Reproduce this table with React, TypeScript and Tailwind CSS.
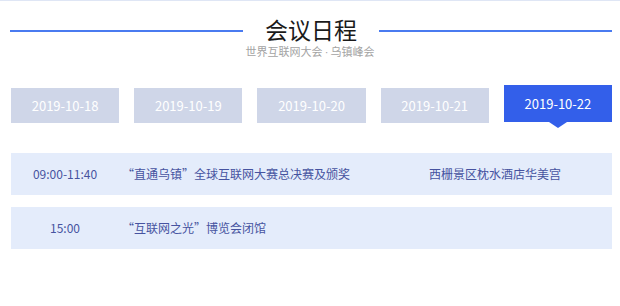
const dates = ["2019-10-18", "2019-10-19", "2019-10-20", "2019-10-21", "2019-10-22"];

const agenda = [
  { time: "09:00-11:40", title: "“直通乌镇”全球互联网大赛总决赛及颁奖", place: "西栅景区枕水酒店华美宫" },
  { time: "15:00", title: "“互联网之光”博览会闭馆", place: "" },
];

export default function App() {
  const active = 4;
  return (
    <div
      className="h-[306px] w-[620px] overflow-hidden border-t border-[#dfe6f5] bg-white"
      style={{ fontFamily: '"Noto Sans CJK SC", "Noto Sans", sans-serif' }}
    >
      {/* Heading */}
      <div className="flex items-center pl-[10px] pr-[8px] pt-[17px] font-['Liberation_Sans','Noto_Sans_CJK_SC',sans-serif]">
        <div className="h-[2px] flex-1 bg-[#4a7bf0]" />
        <h1 className="px-[22px] text-[23px] leading-[26px] text-[#1a1a1a]">会议日程</h1>
        <div className="h-[2px] flex-1 bg-[#4a7bf0]" />
      </div>
      <p className="mt-[2px] text-center font-['Liberation_Sans','Noto_Sans_CJK_SC',sans-serif] text-[11px] leading-[13px] text-[#a3a3a3]">
        世界互联网大会{"\u2009·\u2009"}乌镇峰会
      </p>

      {/* Date tabs */}
      <div className="mt-[29px] flex h-[42px] items-start gap-[15px] pl-[11px] pr-[8px]">
        {dates.map((d, i) =>
          i === active ? (
            <div
              key={d}
              className="relative -mt-[3px] flex h-[37px] flex-1 items-center justify-center bg-[#335fea] text-[13px] text-white"
            >
              {d}
              <span className="absolute left-1/2 top-full -translate-x-1/2 border-x-[9px] border-t-[6px] border-x-transparent border-t-[#335fea]" />
            </div>
          ) : (
            <div
              key={d}
              className="flex h-[35px] flex-1 items-center justify-center bg-[#cfd6e8] text-[13px] text-white"
            >
              {d}
            </div>
          )
        )}
      </div>

      {/* Agenda rows */}
      <div className="mt-[23px] flex flex-col gap-[12px] pl-[11px] pr-[8px]">
        {agenda.map((row) => (
          <div key={row.time} className="flex h-[42px] items-center bg-[#e4ecfb] text-[12px] text-[#4653a0]">
            <span className="w-[108px] text-center">{row.time}</span>
            <span className="w-[310px] pl-[3px]">{row.title}</span>
            <span>{row.place}</span>
          </div>
        ))}
      </div>
    </div>
  );
}
